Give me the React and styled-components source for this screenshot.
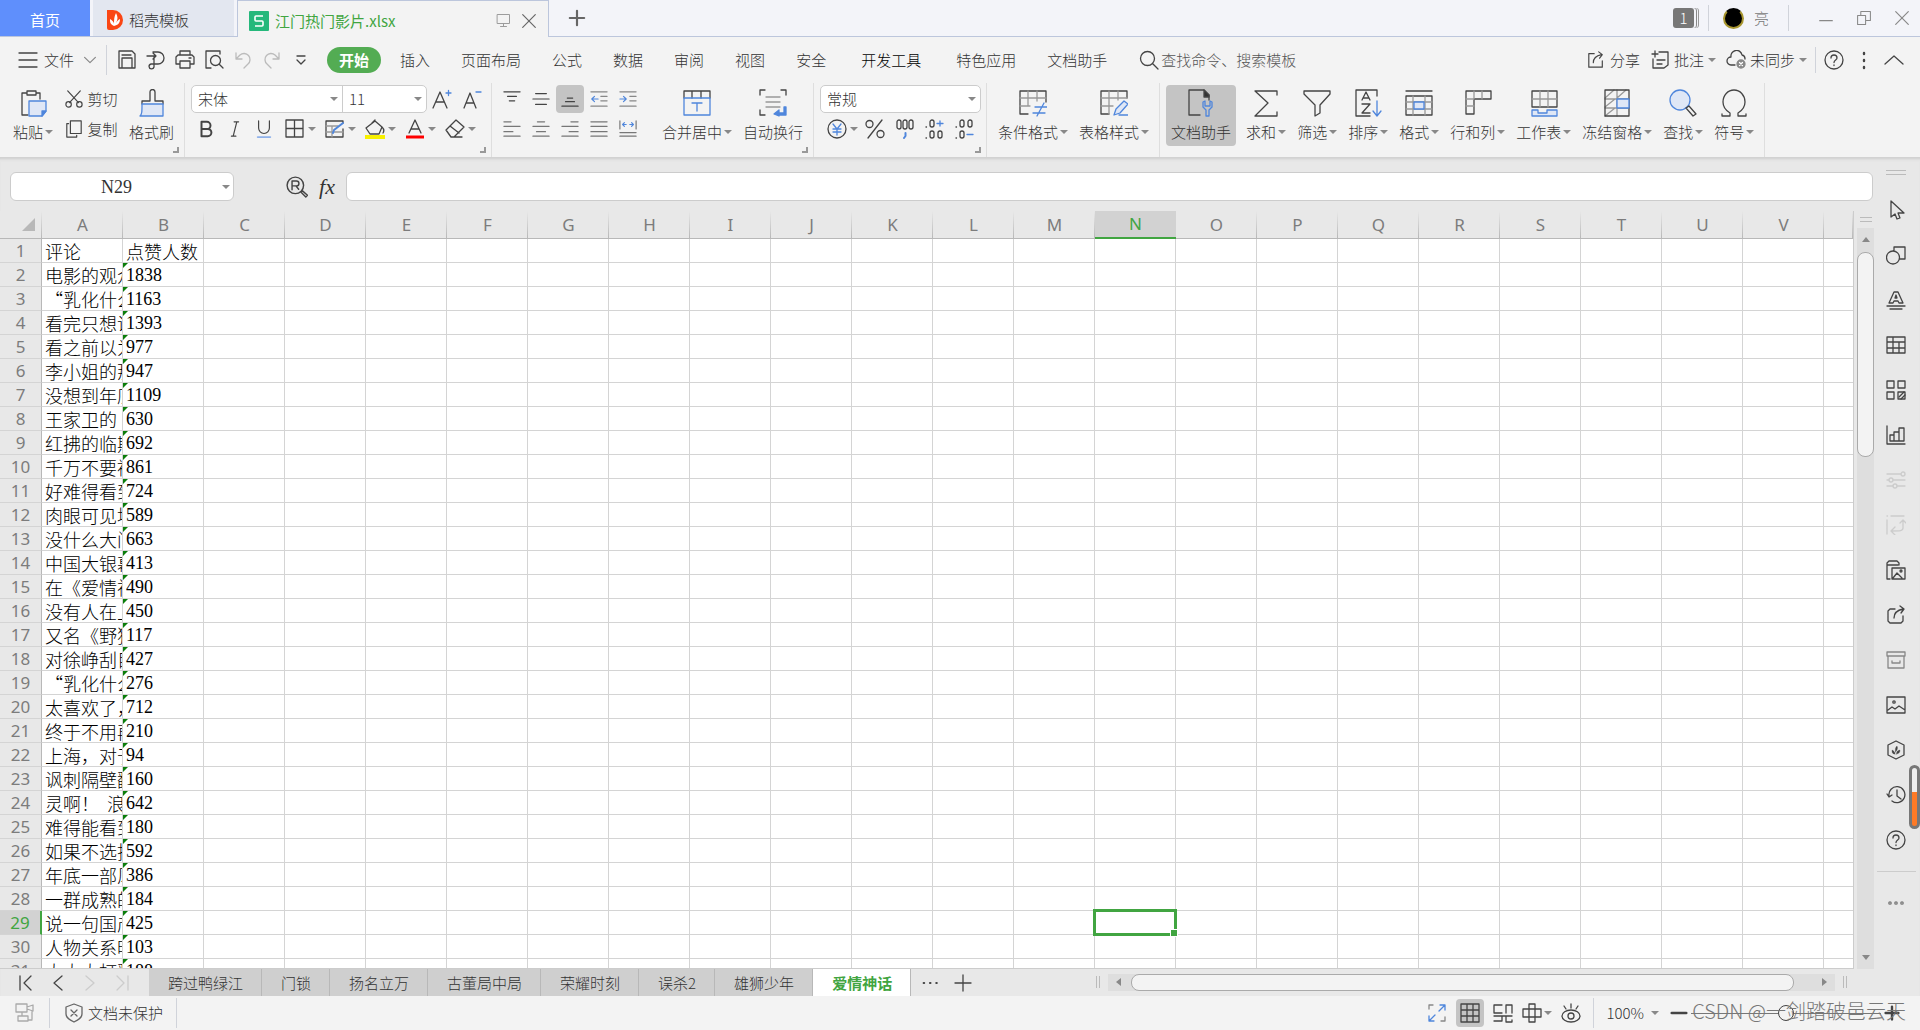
import React from 'react';
import styled, { createGlobalStyle } from 'styled-components';

const uiFont = '"Noto Sans CJK SC", "Noto Sans", sans-serif';
const cellFont = '"Liberation Serif", "Noto Sans CJK SC", serif';
const ink = '#444';
const blue = '#4f86dc';
const green = '#41a541';

const GlobalStyle = createGlobalStyle`
  * {
    box-sizing: border-box;
  }

  body {
    background: #e8e8e8;
    color: #333;
    font-family: ${uiFont};
    font-size: 15px;
    font-weight: 300;
    line-height: 20px;
    margin: 0;
    overflow: hidden;
  }

  button,
  input,
  select {
    background: none;
    border: 0;
    color: inherit;
    font: inherit;
    margin: 0;
    outline: 0;
    padding: 0;
  }
`;

/* ---------- icons ---------- */

const Svg = styled.svg`
  display: block;
  fill: none;
  flex: none;
  stroke: ${props => props.$tone || ink};
  stroke-linecap: round;
  stroke-linejoin: round;
  stroke-width: ${props => props.$weight || 1.3};
`;

const B = { stroke: blue };
const BF = { stroke: blue, fill: '#dfe7f6' };
const G = { stroke: '#999' };

const icons = {
  // 20px
  menu: <path d="M1 3h18M1 10h18M1 17h18" />,
  down: <path d="M4 7l6 6 6-6" />,
  up: <path d="M1 14l9-8 9 8" />,
  save: <path d="M2 1h13l3 3v14H2zM5 18V8h10v10M5 5h9" />,
  exportDoc: <path d="M1 6h9M7 3l3 3-3 3M7 2h5a6 6 0 010 12H8v3a2.500 2.500 0 11-3-3h3V7" />,
  print: <path d="M5 5V1h10v4M3 5h14l2 2v7h-4M5 14H1V7l2-2M5 11h10v7H5zM14 8h2" />,
  preview: <path d="M7 18H2V1h14v3M15 14l4 4M11.5 5.500a5 5 0 100 10 5 5 0 000-10z" />,
  undo: <path d="M3 3v6h6M3 9l4-4a6 6 0 118 9l-4 4" />,
  redo: <path d="M17 3v6h-6M17 9l-4-4a6 6 0 10-8 9l4 4" />,
  more: <path d="M6 6h8M6 10l4 4 4-4" />,
  search: <path d="M8.500 1.500a7 7 0 100 14 7 7 0 000-14zM14 14l5 5" />,
  share: <path d="M8 3H2v15h15v-7M7 13c0-5 4-8 9-9M13 1l4 3-3 4" />,
  comment: <path d="M9 2h9v13l-4 3H3V9M5 1v6M2 4h6M7 10h8M7 14h5" />,
  cloud: (
    <>
      <path d="M9 15H5a4 4 0 010-8 5.500 5.500 0 0111-2 4 4 0 013 4" />
      <circle cx="15" cy="14" r="4" fill="#888" stroke="#888" />
      <path d="M13.500 12.500l3 3M16.500 12.500l-3 3" stroke="#fff" />
    </>
  ),
  help: (
    <>
      <circle cx="10" cy="10" r="9" />
      <path d="M7 8a3 3 0 116 0c0 2-3 2-3 4.500M10 15v.5" />
    </>
  ),
  dots: <path d="M10 3v1M10 10v1M10 17v1" strokeWidth="2.400" />,
  scissors: (
    <>
      <path d="M3 1l12 13M17 1L5 14" />
      <circle cx="4" cy="16" r="3" />
      <circle cx="16" cy="16" r="3" />
    </>
  ),
  copy: <path d="M6 1h12v14H6zM4 4H2v15h11v-2" />,
  fontUp: (
    <>
      <path d="M1 19L8 3l7 16M4 13h8" />
      <path d="M14 4h5M16.500 1.500v5" {...B} />
    </>
  ),
  fontDown: (
    <>
      <path d="M2 19L8 4l6 15M4 14h8" />
      <path d="M14 3h5" {...B} />
    </>
  ),
  bold: <path d="M5 2h6a4 4 0 010 8H5zM5 10h7a4 4 0 010 8H5z" strokeWidth="2.200" />,
  italic: <path d="M9 2h5M6 18h5M12 2L8 18" />,
  underline: (
    <>
      <path d="M4 1v8a6 6 0 0012 0V1" />
      <path d="M3 19h14" stroke="#8fb1ea" strokeWidth="2" />
    </>
  ),
  borders: <path d="M1 1h17v17H1zM9.500 1v17M1 9.500h17" />,
  drawBorder: (
    <>
      <path d="M18 10v8H1V2h17v2" />
      <path d="M1 7h12M1 13h17M7 7v11" {...G} />
      <path d="M8 14l1-3 9-7" {...B} strokeWidth="2" />
    </>
  ),
  fill: (
    <>
      <path d="M1 9l9-7 7 6-3 7H5zM7 4l3-3M17 8c3 3 1 6 1 6" />
      <path d="M0 18h20" stroke="#f7f000" strokeWidth="4" strokeLinecap="butt" />
    </>
  ),
  fontColor: (
    <>
      <path d="M4 14l6-13 6 13M6 10h8" />
      <path d="M1 18h18" stroke="#f00" strokeWidth="3" strokeLinecap="butt" />
    </>
  ),
  eraser: <path d="M1 11L11 1l8 7-10 10H6zM5 7l9 7M9 18h8" />,
  yen: (
    <>
      <circle cx="10" cy="10" r="9" />
      <path d="M6 5l4 5 4-5M10 10v6M6 10h8M6 13h8" {...B} />
    </>
  ),
  percent: (
    <>
      <circle cx="4.500" cy="5" r="3.500" />
      <circle cx="15.500" cy="15" r="3.500" />
      <path d="M17 1L3 19" />
    </>
  ),
  thousands: (
    <>
      <rect x="2" y="1" width="4" height="9" rx="2" />
      <rect x="8" y="1" width="4" height="9" rx="2" />
      <rect x="14" y="1" width="4" height="9" rx="2" />
      <path d="M10.500 14v3l-1.500 2" {...B} strokeWidth="2" />
    </>
  ),
  decimalUp: (
    <>
      <rect x="5" y="1" width="4" height="7" rx="2" />
      <rect x="5" y="12" width="4" height="7" rx="2" />
      <rect x="13" y="12" width="4" height="7" rx="2" />
      <path d="M1 8h.5M1 19h.5" />
      <path d="M12 4.500h6M15 2v5" {...B} />
    </>
  ),
  decimalDown: (
    <>
      <rect x="5" y="1" width="4" height="7" rx="2" />
      <rect x="13" y="1" width="4" height="7" rx="2" />
      <rect x="5" y="12" width="4" height="7" rx="2" />
      <path d="M1 8h.5M1 19h.5" />
      <path d="M12 15.500h6" {...B} />
    </>
  ),
  alignTop: <path d="M1 2h18M5 7h10M7 12h6" />,
  alignMiddle: <path d="M4 4h12M1 10h18M4 16h12" />,
  alignBottom: <path d="M7 9h6M5 13h10M1 18h18" />,
  outdent: (
    <>
      <path d="M1 2h18M12 7h7M12 12h7M1 18h18" stroke="#888" />
      <path d="M9 10H2M5 7l-3 3 3 3" {...B} />
    </>
  ),
  indent: (
    <>
      <path d="M1 2h18M12 7h7M12 12h7M1 18h18" stroke="#888" />
      <path d="M1 10h7M5 7l3 3-3 3" {...B} />
    </>
  ),
  alignLeft: <path d="M1 2h8M1 7h18M1 13h10M1 18h18" />,
  alignCenter: <path d="M6 2h8M1 7h18M5 13h10M1 18h18" />,
  alignRight: <path d="M11 2h8M1 7h18M9 13h10M1 18h18" />,
  justify: <path d="M1 2h18M1 7h18M1 13h18M1 18h18" />,
  distribute: (
    <>
      <path d="M1 1v9M19 1v9M1 14h18M1 18h18" />
      <path d="M4 5h4M12 5h4M6 3L4 5l2 2M14 3l2 2-2 2" {...B} />
    </>
  ),
  findCell: (
    <>
      <circle cx="8.500" cy="8.500" r="7.500" />
      <path d="M5.500 12.500v-8h4a2.200 2.200 0 010 4.500h-4M9 9l2.500 3M13.500 14.500l1.500-1 4.500 4-1.500 1.500z" />
    </>
  ),
  // 28px
  paste: (
    <>
      <path d="M7 4H3v22h6M21 10V4h-4M8 2h9v4H8z" />
      <path d="M10 12h17v10l-4 5H10z" {...BF} />
      <path d="M23 27v-5h4z" fill={blue} {...B} />
    </>
  ),
  brush: (
    <>
      <path d="M4 15v-3h8V3a2.500 2.500 0 015 0v9h8v3" />
      <path d="M4 15h21v12H2c2-2 2-4 2-12z" {...BF} />
    </>
  ),
  merge: (
    <>
      <path d="M1 9V2h26v7M9 2v7M18 2v7" />
      <path d="M1 9h26v17H1zM9 14h10M14 14v8" {...B} />
    </>
  ),
  wrap: (
    <>
      <path d="M1 6V1h5M22 1h5v5M1 21v5h5" />
      <path d="M7 8h14M7 13h14M7 18h14" {...G} />
      <path d="M25 18h2v8H20v1l-5-2 5-4v3h5z" fill={blue} {...B} />
    </>
  ),
  conditional: (
    <>
      <path d="M9 25H1V2h26v11" />
      <path d="M1 9h26M1 17h10M9 2v15M18 2v10" {...G} />
      <path d="M16 18h12M14 24h12M25 14l-7 13" {...B} />
    </>
  ),
  tableStyle: (
    <>
      <path d="M9 25H1V2h26v7" />
      <path d="M1 9h26M1 17h12M9 2v23M18 2v9" {...G} />
      <path d="M14 26l2-6 8-8 4 3-8 9zM19 26h9" {...BF} />
    </>
  ),
  helper: (
    <>
      <path d="M13 26H2V1h15l5 5v5" />
      <path d="M17 1l5 5v2h-5z" fill="#333" />
      <path d="M16 13v5l3 3v6h3v-6l3-3v-5l-2-1v5h-5v-5z" {...B} />
    </>
  ),
  sum: <path d="M25 6V2H3l13 12L3 27h22v-4" />,
  filter: <path d="M1 2h26v3L17 16v8l-5 3V16L1 5z" />,
  sort: (
    <>
      <path d="M23 7V1H2v26h14" />
      <path d="M8 11l4-8 4 8M9 9h6M8 15h8l-8 9h8" />
      <path d="M23 12v14M19 22l4 5 4-5" {...B} />
    </>
  ),
  format: (
    <>
      <path d="M1 2h26M1 7h26v19H1z" />
      <path d="M1 13h26M1 20h26M8 7v19M20 7v19" {...G} />
      <path d="M9 13h10v7H9z" {...BF} />
    </>
  ),
  rowCol: (
    <>
      <path d="M2 2h25v8H10v15H2z" />
      <path d="M10 2v8M18 2v8M2 10h8M2 17h8" {...G} />
    </>
  ),
  worksheet: (
    <>
      <path d="M2 2h25v16H2z" />
      <path d="M2 10h25M10 2v16M18 2v16" {...G} />
      <path d="M2 21h6v3h9v-3h10v6H2z" {...BF} />
    </>
  ),
  freeze: (
    <>
      <path d="M2 10h24M2 19h24M14 1v26M2 9l9-8M14 9l9-8M2 18l10-8M2 27l10-8" {...G} />
      <path d="M2 1h24v26H2z" />
      <path d="M14 10h12v9H14z" {...BF} />
    </>
  ),
  find: (
    <>
      <circle cx="11" cy="11" r="10" {...BF} />
      <path d="M17 19l3-2 7 8-3 2z" />
    </>
  ),
  omega: <path d="M2 27h8v-3C5 21 3 17 3 13a11 12 0 0122 0c0 4-2 8-7 11v3h8M2 27v-2M26 27v-2" />,
  // side bar, 20px
  cursor: <path d="M5 1v16l4-3 2 5 3-1-2-5h6z" />,
  shapes: <path d="M8 6V2h11v12h-5M7 6a6.500 6.500 0 100 13A6.500 6.500 0 007 6z" />,
  wordArt: <path d="M3 13L8 2h4l5 11h-4l-1-2H8l-1 2zM9 8l1-3 1 3zM1 16h18M4 19h12" />,
  table: <path d="M1 2h18v16H1zM1 7h18M1 13h18M7 2v16M13 7v11" />,
  blocks: (
    <>
      <path d="M1 1h7v7H1zM12 1h7v7h-7zM1 12h7v7H1zM12 12h7v7h-7z" />
      <path d="M13 17l5-5M15 19l4-4" />
    </>
  ),
  chart: <path d="M1 1v18h18M4 16v-6h4v6zM8 16V7h5v9zM13 16V3h5v13z" />,
  sliders: (
    <>
      <path d="M1 4h14M1 10h2M7 10h12M1 16h6M11 16h8" />
      <circle cx="17" cy="4" r="2" />
      <circle cx="5" cy="10" r="2" />
      <circle cx="9" cy="16" r="2" />
    </>
  ),
  pivot: <path d="M1 1h.5M5 1h13M1 5v14M17 6v7c0 3-3 3-11 3M14 8l3-3 3 3M9 12l-4 4 4 4" />,
  gallery: (
    <>
      <path d="M4 19H1V3l2-2h8l2 2v2M1 5h11M6 8h13v11H6zM7 18l4-5 5 5" />
      <circle cx="15" cy="11" r="1" />
    </>
  ),
  shareSide: <path d="M9 4H4L2 6v10l2 2h11l2-2v-5M8 13c0-5 4-8 9-9M14 1l4 3-3 4" />,
  archive: <path d="M1 2h18v4H1zM2 6v12h16V6M6 11v2h8v-2" />,
  image: (
    <>
      <path d="M1 2h18v16H1zM2 15l4-3 3 2 4-3 6 4" />
      <circle cx="8" cy="7" r="1.200" />
    </>
  ),
  docer: (
    <>
      <path d="M10 1l8 4v10l-8 4-8-4V5z" />
      <path d="M9 14c-3 0-3-2-3-4 2 1 3 2 3 4zM9.500 12c-.5-3 0-5 1.500-6 1 2 .5 4-1.500 6zM10.500 14c0-2.500 1-3.500 3.500-4 0 2.500-1 3.500-3.500 4z" fill={ink} strokeWidth="0.300" />
    </>
  ),
  history: <path d="M3 11a8 8 0 113 5M1 9l2 3 3-2M11 5v6l4 3" />,
  ellipsis: (
    <>
      <circle cx="4" cy="10" r="1.200" />
      <circle cx="10" cy="10" r="1.200" />
      <circle cx="16" cy="10" r="1.200" />
    </>
  ),
  // bottom bars
  first: <path d="M4 3v14M15 3l-7 7 7 7" />,
  prev: <path d="M14 3l-8 7 8 7" />,
  next: <path d="M6 3l8 7-8 7" />,
  last: <path d="M5 3l7 7-7 7M16 3v14" />,
  threeDots: <path d="M3 10h.5M10 10h.5M17 10h.5" strokeWidth="2.400" />,
  plus: <path d="M10 2v16M2 10h16" />,
  record: <path d="M1 1h11v8H1zM12 4l6-2v6l-6-2M7 9v4M17 8v8M3 13h10v5H3zM13 17h4" />,
  shield: <path d="M10 1l8 3v7c0 4-4 6-8 8-4-2-8-4-8-8V4zM7 7l6 6M13 7l-6 6" />,
  fullscreen: (
    <>
      <path d="M2 6V2h4M18 14v4h-4" stroke="#888" />
      <path d="M12 8l6-6M13 2h5v5M8 12l-6 6M2 13v5h5" {...B} />
    </>
  ),
  normalView: <path d="M1 1h18v18H1zM1 7h18M1 13h18M7 1v18M13 1v18" />,
  pageView: <path d="M1 7V2h8M1 7v3h8M13 2v8M13 2h6v8M1 13h18M13 13v6h6v-2M1 18h8v-5" />,
  readView: <path d="M7 1h6v18H7zM1 6h18v8H1zM7 6v8M13 6v8" />,
  eye: (
    <>
      <ellipse cx="10" cy="13" rx="9" ry="6" />
      <circle cx="10" cy="13" r="3" />
      <path d="M10 1v4M3 3l2 3M17 3l-2 3" />
    </>
  ),
  // window
  screen: <path d="M2 2h16v12H2zM10 14v4M6 18h8" />,
  close: <path d="M3 3l14 14M17 3L3 17" />,
  restore: <path d="M2 7h10v11H2zM6 7V2h12v11h-6" />,
  minimize: <path d="M3 13h14" />,
  zoomOut: <path d="M2 10h16" />,
};

const Icon = ({ name, size = 20, box = 20, tone, weight }) => (
  <Svg width={size} height={size} viewBox={`0 0 ${box} ${box}`} $tone={tone} $weight={weight} aria-hidden="true">
    {icons[name]}
  </Svg>
);

const Caret = styled.span`
  border: 4px solid transparent;
  border-bottom-width: 0;
  border-top-color: #888;
  flex: none;
  height: 0;
  width: 0;
`;

/* ---------- title bar ---------- */

const Window = styled.div`
  display: flex;
  flex-direction: column;
  height: 100vh;
  overflow: hidden;
`;

const TitleBar = styled.header`
  align-items: stretch;
  background: #f3f4f9;
  border-bottom: 1px solid #bcc6dc;
  display: flex;
  flex: none;
  height: 37px;
`;

const HomeTab = styled.button`
  background: #5f8ffc;
  color: #fff;
  font-weight: 400;
  margin-right: 3px;
  padding-top: 3px;
  width: 90px;
`;

const DocTab = styled.button`
  align-items: center;
  background: ${props => (props.$active ? '#f3f3f3' : '#e3e7f0')};
  border: ${props => (props.$active ? '1px solid #bcc6dc' : '0')};
  border-bottom: 0;
  color: ${props => (props.$active ? green : '#333')};
  display: flex;
  font-weight: ${props => (props.$active ? 400 : 300)};
  gap: 6px;
  height: ${props => (props.$active ? '37px' : '36px')};
  margin-right: 3px;
  padding: 3px 9px 0 ${props => (props.$active ? '11px' : '14px')};
  text-align: left;
  width: ${props => props.$width}px;
`;

const TabName = styled.span`
  flex: 1;
`;

const TabTool = styled.span`
  display: flex;
  justify-content: center;
  width: 20px;
`;

const PlainButton = styled.button`
  align-items: center;
  display: flex;
  gap: ${props => props.$gap || 0}px;
  justify-content: center;
  min-width: ${props => props.$width || 0}px;
  white-space: nowrap;
`;

const TitleTools = styled.div`
  align-items: center;
  color: #777;
  display: flex;
  margin-left: auto;
`;

const Rule = styled.span`
  background: #d0d3da;
  flex: none;
  height: ${props => props.$height}px;
  margin: 0 ${props => props.$gap}px;
  width: 1px;
`;

const WindowCount = styled.span`
  background: #777;
  border-radius: 3px;
  box-shadow: 2px 0 0 #f3f4f9, 3px 0 0 #888, 4px 0 0 #f3f4f9, 5px 0 0 #999;
  color: #fff;
  line-height: 20px;
  text-align: center;
  width: 21px;
`;

const Avatar = styled.span`
  background: #000;
  border: 2px solid #a8962f;
  border-radius: 50%;
  border-top-color: #000;
  height: 21px;
  margin-right: 10px;
  width: 21px;
`;

/* ---------- menu ---------- */

const MenuBar = styled.nav`
  align-items: center;
  background: #f3f3f3;
  display: flex;
  flex: none;
  height: 46px;
  padding: 0 16px 0 18px;
`;

const QuickTools = styled.div`
  display: flex;
  gap: 9px;
`;

const MenuItems = styled.div`
  align-items: center;
  display: flex;
  gap: 31px;
  margin-left: 28px;
`;

const MenuItem = styled.button`
  color: ${props => (props.$strong ? '#000' : '#333')};
  margin: 0 ${props => (props.$strong ? 4 : 0)}px;
  white-space: nowrap;
`;

const ActiveMenu = styled.button`
  background: #53ac53;
  border-radius: 13px;
  color: #fff;
  font-weight: 700;
  height: 26px;
  margin: 0 -12px;
  padding: 0 12px;
`;

const SearchBox = styled.label`
  align-items: center;
  display: flex;
  flex: 1;
  gap: 2px;
  margin-left: 32px;

  input {
    flex: 1;
    min-width: 0;
  }

  input::placeholder {
    color: #555;
    opacity: 1;
  }
`;

const MenuRight = styled.div`
  align-items: center;
  display: flex;
  gap: 10px;
`;

/* ---------- ribbon ---------- */

const Ribbon = styled.section`
  background: #f3f3f3;
  border-bottom: 1px solid #d2d2d2;
  display: flex;
  flex: none;
  height: 75px;
  padding-left: 8px;
`;

const Group = styled.div`
  border-right: 1px solid #dedede;
  display: flex;
  gap: 1px;
  margin-right: 6px;
  padding: 2px 5px 0 0;
  position: relative;
`;

const Corner = styled.span`
  border: solid #999;
  border-width: 0 2px 2px 0;
  bottom: 4px;
  height: 6px;
  position: absolute;
  right: 5px;
  width: 6px;
`;

const BigButton = styled.button`
  align-items: center;
  background: ${props => (props.$active ? '#c4c4c4' : 'none')};
  border-radius: 4px;
  display: flex;
  flex-direction: column;
  gap: 5px;
  height: 61px;
  margin-right: ${props => (props.$active ? 4 : 0)}px;
  padding: 4px 5px 0;
`;

const Label = styled.span`
  align-items: center;
  display: flex;
  gap: 2px;
  white-space: nowrap;
`;

const Rows = styled.div`
  display: flex;
  flex-direction: column;
  gap: 2px;
  margin-right: ${props => props.$after || 0}px;
`;

const Row = styled.div`
  align-items: center;
  display: flex;
  gap: ${props => props.$gap || 0}px;
  height: 28px;
`;

const SmallButton = styled.button`
  align-items: center;
  background: ${props => (props.$active ? '#c4c4c4' : 'none')};
  border-radius: 4px;
  display: flex;
  height: 28px;
  justify-content: center;
  width: ${props => props.$width || 28}px;
`;

const SplitButton = styled.button`
  align-items: center;
  display: flex;
  gap: 3px;
  height: 28px;
  padding-left: 7px;
  width: 40px;
`;

const SelectGroup = styled.div`
  background: #fff;
  border: 1px solid #ccc;
  border-radius: 5px;
  display: flex;
  height: 28px;
`;

const SelectBox = styled.label`
  align-items: center;
  display: flex;
  position: relative;
  width: ${props => props.$width}px;

  & + & {
    border-left: 1px solid #ccc;
  }

  select {
    appearance: none;
    height: 100%;
    padding: 0 6px;
    width: 100%;
  }

  ${Caret} {
    pointer-events: none;
    position: absolute;
    right: 4px;
  }
`;

/* ---------- work area ---------- */

const Workspace = styled.main`
  box-shadow: inset 0 3px 3px -2px #ccc;
  display: flex;
  flex: 1;
  min-height: 0;
`;

const Book = styled.div`
  display: flex;
  flex: 1;
  flex-direction: column;
  min-width: 0;
`;

const FormulaBar = styled.div`
  align-items: center;
  display: flex;
  flex: none;
  height: 53px;
  padding: 14px 5px 10px 10px;
`;

const NameBox = styled.label`
  align-items: center;
  background: #fff;
  border: 1px solid #ccc;
  border-radius: 6px;
  display: flex;
  height: 29px;
  margin-right: 52px;
  padding-right: 3px;
  width: 224px;

  input {
    flex: 1;
    font-family: ${cellFont};
    font-size: 18px;
    min-width: 0;
    text-align: center;
  }
`;

const Fx = styled.button`
  font-family: "Liberation Serif", serif;
  font-size: 22px;
  font-style: italic;
  line-height: 26px;
  margin: 0 9px;
  width: 20px;
`;

const FormulaInput = styled.input`
  background: #fff;
  border: 1px solid #ccc;
  border-radius: 6px;
  flex: 1;
  height: 29px;
  min-width: 0;
`;

const SheetArea = styled.div`
  display: flex;
  flex: 1;
  min-height: 0;
`;

const SheetView = styled.div`
  border-bottom: 1px solid #ccc;
  border-right: 1px solid #ccc;
  flex: 1;
  min-width: 0;
  overflow: hidden;
`;

const Sheet = styled.table`
  border-collapse: separate;
  border-spacing: 0;
  table-layout: fixed;
  width: 100%;

  th,
  td {
    padding: 0;
  }
`;

const Col = styled.col`
  width: ${props => props.$width};
`;

const ColHead = styled.th`
  background: ${props =>
    props.$selected ? '#d2d2d2' : 'linear-gradient(#e8e8e8, #b8b8b8) right / 1px 100% no-repeat #e8e8e8'};
  border-bottom: ${props => (props.$selected ? `2px solid ${green}` : '1px solid #b8b8b8')};
  color: ${props => (props.$selected ? green : '#7c7c7c')};
  font-family: "Noto Sans", sans-serif;
  font-size: 17px;
  font-weight: 400;
  height: 28px;
  line-height: 24px;
`;

const SelectAll = styled.button`
  border-bottom: 13px solid #b8b8b8;
  border-left: 13px solid transparent;
  display: block;
  height: 0;
  margin-left: 22px;
  width: 0;
`;

const RowHead = styled.th`
  background: ${props => (props.$selected ? '#d2d2d2' : '#e8e8e8')};
  border-bottom: 1px solid #d4d4d4;
  border-right: ${props => (props.$selected ? `2px solid ${green}` : '1px solid #b8b8b8')};
  color: ${props => (props.$selected ? green : '#7c7c7c')};
  font-family: "Noto Sans", sans-serif;
  font-size: 17px;
  font-weight: 400;
  height: 24px;
  line-height: 22px;
`;

const Cell = styled.td`
  background: #fff;
  border-bottom: 1px solid #d4d4d4;
  border-right: 1px solid #d4d4d4;
  color: #000;
  font-family: ${props => (props.$number ? cellFont : uiFont)};
  font-size: 18px;
  font-weight: 300;
  height: 24px;
  line-height: 24px;
  position: relative;

  &:last-child {
    border-right: 0;
  }
`;

const CellText = styled.div`
  height: 23px;
  overflow: hidden;
  padding-left: 3px;
  white-space: pre;
`;

// green corner of a number stored as text
const TextFlag = styled.span`
  border-right: 5px solid transparent;
  border-top: 5px solid #0a7d0a;
  left: 0;
  position: absolute;
  top: 0;
`;

const Selection = styled.span`
  border: 3px solid ${green};
  inset: -2px;
  pointer-events: none;
  position: absolute;
  z-index: 1;

  &::after {
    background: ${green};
    border: 1px solid #fff;
    bottom: -4px;
    content: '';
    height: 6px;
    position: absolute;
    right: -4px;
    width: 6px;
  }
`;

const ScrollColumn = styled.div`
  align-items: center;
  display: flex;
  flex: none;
  flex-direction: column;
  padding: 6px 1px 0 0;
  width: 24px;
`;

const Grip = styled.span`
  border: solid #bbb;
  border-width: ${props => (props.$upright ? '0 1px' : '1px 0')};
  flex: none;
  height: ${props => (props.$upright ? 12 : 5)}px;
  width: ${props => (props.$upright ? 4 : props.$width)}px;
`;

const VTrack = styled.div`
  align-items: center;
  background: #dedede;
  display: flex;
  flex: 1;
  flex-direction: column;
  margin-top: 6px;
  padding: 9px 0;
  width: 17px;
`;

const Thumb = styled.div`
  background: #f3f3f3;
  border: 1px solid #aaa;
  border-radius: 8px;
`;

const VThumb = styled(Thumb)`
  height: 28.3%;
  margin: 10px 0 auto;
  width: 17px;
`;

const HThumb = styled(Thumb)`
  flex: 1;
  height: 17px;
  margin: 0 28px 0 10px;
`;

const Arrow = styled.button`
  border: 4px solid transparent;
  border-${props => props.$from}: 5px solid #888;
  border-${props => props.$to}: 0;
  flex: none;
  height: 0;
  width: 0;
`;

const SheetBar = styled.div`
  align-items: stretch;
  display: flex;
  flex: none;
  height: 27px;
`;

const SheetNav = styled.div`
  align-items: center;
  display: flex;
  gap: 12px;
  padding: 0 17px 0 16px;
`;

const SheetTab = styled.button`
  background: ${props => (props.$active ? '#fff' : '#cfcfcf')};
  border-right: 1px solid #b8b8b8;
  color: ${props => (props.$active ? green : '#333')};
  font-weight: ${props => (props.$active ? 700 : 300)};
  padding: 0 18px 0 19px;
  white-space: nowrap;
`;

const HScroll = styled.div`
  align-items: center;
  display: flex;
  gap: 8px;
  margin: 0 31px 0 auto;
  padding-bottom: 1px;
  width: 40%;
`;

const HTrack = styled.div`
  align-items: center;
  background: #dedede;
  display: flex;
  flex: 1;
  height: 17px;
  padding: 0 8px;
`;

const SideBar = styled.aside`
  align-items: center;
  display: flex;
  flex: none;
  flex-direction: column;
  gap: 25px;
  padding: 12px 6px 0 0;
  width: 42px;
`;

const SideRule = styled.span`
  background: #ccc;
  height: 1px;
  margin: -4px 0;
  width: 39px;
`;

const Gauge = styled.div`
  background: linear-gradient(#eee 42%, #ff7a26 42%);
  border: 3px solid #777;
  border-radius: 6px;
  height: 64px;
  position: absolute;
  right: 0;
  top: 765px;
  width: 11px;
`;

/* ---------- status bar ---------- */

const StatusBar = styled.footer`
  align-items: center;
  background: #f3f3f3;
  display: flex;
  flex: none;
  height: 34px;
  padding: 0 20px 0 15px;
  position: relative;
`;

const ViewTools = styled.div`
  align-items: center;
  display: flex;
  gap: 9px;
  margin-left: auto;
`;

const ZoomRange = styled.input`
  appearance: none;
  height: 16px;
  margin: 0 3px;
  width: 190px;

  &::-webkit-slider-runnable-track {
    background: linear-gradient(#777, #777) center / 100% 1px no-repeat;
    height: 16px;
  }

  &::-webkit-slider-thumb {
    appearance: none;
    background: #f3f3f3;
    border: 1px solid #444;
    border-radius: 50%;
    height: 16px;
    width: 16px;
  }
`;

const Watermark = styled.span`
  color: #777;
  font-size: 20px;
  padding-bottom: 5px;
  pointer-events: none;
  position: absolute;
  right: 14px;
  white-space: nowrap;
`;

/* ---------- data ---------- */

const columns = 'ABCDEFGHIJKLMNOPQRSTUV'.split('');

const rows = [
  ['评论', '点赞人数'],
  ['电影的观众', '1838'],
  ['“乳化什么', '1163'],
  ['看完只想说', '1393'],
  ['看之前以为', '977'],
  ['李小姐的那', '947'],
  ['没想到年底', '1109'],
  ['王家卫的', '630'],
  ['红拂的临期', '692'],
  ['千万不要被', '861'],
  ['好难得看到', '724'],
  ['肉眼可见地', '589'],
  ['没什么大问', '663'],
  ['中国大银幕', '413'],
  ['在《爱情神', '490'],
  ['没有人在上', '450'],
  ['又名《野狼', '117'],
  ['对徐峥刮目', '427'],
  ['“乳化什么', '276'],
  ['太喜欢了，', '712'],
  ['终于不用再', '210'],
  ['上海，对于', '94'],
  ['讽刺隔壁翻', '160'],
  ['灵啊！  浪', '642'],
  ['难得能看到', '180'],
  ['如果不选择', '592'],
  ['年底一部风', '386'],
  ['一群成熟的', '184'],
  ['说一句国产', '425'],
  ['人物关系明', '103'],
  ['大大大打翻', '188'],
];

const selected = { column: 'N', row: 29 };

const menus = ['插入', '页面布局', '公式', '数据', '审阅', '视图', '安全', '开发工具', '特色应用', '文档助手'];

const tools = [
  { icon: 'helper', label: '文档助手', active: true },
  { icon: 'sum', label: '求和' },
  { icon: 'filter', label: '筛选' },
  { icon: 'sort', label: '排序' },
  { icon: 'format', label: '格式' },
  { icon: 'rowCol', label: '行和列' },
  { icon: 'worksheet', label: '工作表' },
  { icon: 'freeze', label: '冻结窗格' },
  { icon: 'find', label: '查找' },
  { icon: 'omega', label: '符号' },
];

const sheets = ['跨过鸭绿江', '门锁', '扬名立万', '古董局中局', '荣耀时刻', '误杀2', '雄狮少年', '爱情神话'];

const sideTools = [
  ['cursor'],
  ['shapes'],
  ['wordArt'],
  ['table'],
  ['blocks'],
  ['chart'],
  ['sliders', '#ccc'],
  ['pivot', '#ccc'],
  ['gallery'],
  ['shareSide'],
  ['archive', '#888'],
  ['image'],
  ['docer'],
  ['history'],
  ['help'],
];

/* ---------- components ---------- */

const Tool = ({ icon, label, active, caret = !active }) => (
  <BigButton $active={active}>
    <Icon name={icon} size={28} box={28} />
    <Label>
      {label}
      {caret && <Caret />}
    </Label>
  </BigButton>
);

const Split = ({ icon, label }) => (
  <SplitButton aria-label={label}>
    <Icon name={icon} />
    <Caret />
  </SplitButton>
);

const Choice = ({ label, value, width }) => (
  <SelectBox $width={width}>
    <select aria-label={label} defaultValue={value}>
      <option>{value}</option>
    </select>
    <Caret />
  </SelectBox>
);

const Title = () => (
  <TitleBar>
    <HomeTab>首页</HomeTab>
    <DocTab $width={141}>
      <svg width="16" height="24" viewBox="0 0 16 24" aria-hidden="true">
        <path d="M0 2h6a10 10 0 0110 10A10 10 0 016 22H2a2 2 0 01-2-2z" fill="#fa4614" />
        <path d="M7 18c-4-2-4-4-4-7 2 1 4 3 4 5 0-4 0-7 2-11 2 4 2 6 0 10 1-2 2-3 4-4 0 4-2 6-6 7z" fill="#fff" />
      </svg>
      稻壳模板
    </DocTab>
    <DocTab $width={312} $active>
      <svg width="20" height="20" viewBox="0 0 20 20" aria-hidden="true">
        <rect width="20" height="20" rx="1" fill="#25b87b" />
        <path d="M14 5H7a1 1 0 00-1 1v3a1 1 0 001 1h6a1 1 0 011 1v3a1 1 0 01-1 1H6" fill="none" stroke="#fff" strokeWidth="1.600" />
      </svg>
      <TabName>江门热门影片.xlsx</TabName>
      <TabTool>
        <Icon name="screen" size={15} tone="#999" />
      </TabTool>
      <TabTool>
        <Icon name="close" size={18} tone="#666" />
      </TabTool>
    </DocTab>
    <PlainButton $width={50} aria-label="新建">
      <Icon name="plus" size={18} weight={2.4} tone="#666" />
    </PlainButton>
    <TitleTools>
      <WindowCount>1</WindowCount>
      <Rule $height={26} $gap={14} />
      <Avatar />
      亮
      <Rule $height={26} $gap={19} />
      <PlainButton $width={36} aria-label="最小化">
        <Icon name="minimize" size={18} tone="#888" />
      </PlainButton>
      <PlainButton $width={40} aria-label="还原">
        <Icon name="restore" size={16} tone="#888" />
      </PlainButton>
      <PlainButton $width={36} aria-label="关闭">
        <Icon name="close" size={18} tone="#888" />
      </PlainButton>
    </TitleTools>
  </TitleBar>
);

const Menu = () => (
  <MenuBar>
    <PlainButton $gap={6}>
      <Icon name="menu" />
      文件
    </PlainButton>
    <Rule $height={0} $gap={3} />
    <Icon name="down" size={18} tone="#888" />
    <Rule $height={30} $gap={7} />
    <Rule $height={0} $gap={1} />
    <QuickTools>
      {['save', 'exportDoc', 'print', 'preview'].map(name => (
        <PlainButton key={name} aria-label={name}>
          <Icon name={name} />
        </PlainButton>
      ))}
      <Icon name="undo" tone="#bbb" />
      <Icon name="redo" tone="#bbb" />
      <Icon name="more" />
    </QuickTools>
    <MenuItems>
      <ActiveMenu>开始</ActiveMenu>
      {menus.map(name => (
        <MenuItem key={name} $strong={name === '开发工具'}>
          {name}
        </MenuItem>
      ))}
    </MenuItems>
    <SearchBox>
      <Icon name="search" />
      <input aria-label="搜索" placeholder="查找命令、搜索模板" />
    </SearchBox>
    <MenuRight>
      <PlainButton $gap={5}>
        <Icon name="share" size={18} />
        分享
      </PlainButton>
      <PlainButton $gap={4}>
        <Icon name="comment" />
        批注
        <Caret />
      </PlainButton>
      <PlainButton $gap={4}>
        <Icon name="cloud" />
        未同步
        <Caret />
      </PlainButton>
      <Rule $height={26} $gap={-2} />
      <Icon name="help" />
      <Icon name="dots" />
      <Icon name="up" />
    </MenuRight>
  </MenuBar>
);

const RibbonBar = () => (
  <Ribbon>
    <Group>
      <Tool icon="paste" label="粘贴" />
      <Rows>
        <Row>
          <PlainButton $gap={5} $width={64}>
            <Icon name="scissors" size={18} />
            剪切
          </PlainButton>
        </Row>
        <Row>
          <PlainButton $gap={5} $width={64}>
            <Icon name="copy" size={18} />
            复制
          </PlainButton>
        </Row>
      </Rows>
      <Tool icon="brush" label="格式刷" caret={false} />
      <Corner />
    </Group>
    <Group>
      <Rows>
        <Row>
          <SelectGroup>
            <Choice label="字体" value="宋体" width={150} />
            <Choice label="字号" value="11" width={84} />
          </SelectGroup>
          <SmallButton $width={30} aria-label="增大字号">
            <Icon name="fontUp" />
          </SmallButton>
          <SmallButton $width={29} aria-label="减小字号">
            <Icon name="fontDown" />
          </SmallButton>
        </Row>
        <Row>
          {['bold', 'italic', 'underline'].map(name => (
            <SmallButton key={name} $width={29} aria-label={name}>
              <Icon name={name} size={18} />
            </SmallButton>
          ))}
          <Split icon="borders" label="边框" />
          <Split icon="drawBorder" label="绘图边框" />
          <Split icon="fill" label="填充颜色" />
          <Split icon="fontColor" label="字体颜色" />
          <Split icon="eraser" label="清除" />
        </Row>
      </Rows>
      <Corner />
    </Group>
    <Group>
      <Rows $after={14}>
        <Row $gap={1}>
          {['alignTop', 'alignMiddle', 'alignBottom', 'outdent', 'indent'].map(name => (
            <SmallButton key={name} $active={name === 'alignBottom'} aria-label={name}>
              <Icon name={name} size={18} />
            </SmallButton>
          ))}
        </Row>
        <Row $gap={1}>
          {['alignLeft', 'alignCenter', 'alignRight', 'justify', 'distribute'].map(name => (
            <SmallButton key={name} aria-label={name}>
              <Icon name={name} size={18} tone="#777" />
            </SmallButton>
          ))}
        </Row>
      </Rows>
      <Tool icon="merge" label="合并居中" />
      <Tool icon="wrap" label="自动换行" caret={false} />
      <Corner />
    </Group>
    <Group>
      <Rows>
        <Row>
          <SelectGroup>
            <Choice label="数字格式" value="常规" width={159} />
          </SelectGroup>
        </Row>
        <Row>
          <Split icon="yen" label="货币" />
          {['percent', 'thousands', 'decimalUp', 'decimalDown'].map(name => (
            <SmallButton key={name} $width={30} aria-label={name}>
              <Icon name={name} />
            </SmallButton>
          ))}
        </Row>
      </Rows>
      <Corner />
    </Group>
    <Group>
      <Tool icon="conditional" label="条件格式" />
      <Tool icon="tableStyle" label="表格样式" />
    </Group>
    <Group>
      {tools.map(tool => (
        <Tool key={tool.label} {...tool} />
      ))}
    </Group>
  </Ribbon>
);

const SheetRow = ({ number, values }) => (
  <tr>
    <RowHead scope="row" $selected={number === selected.row}>
      {number}
    </RowHead>
    {columns.map((column, i) => (
      <Cell key={column} $number={i === 1 && number > 1}>
        {values[i] && <CellText>{values[i]}</CellText>}
        {i === 1 && number > 1 && <TextFlag />}
        {column === selected.column && number === selected.row && <Selection />}
      </Cell>
    ))}
    <Cell />
  </tr>
);

const Grid = () => (
  <SheetView>
    <Sheet>
      <colgroup>
        <Col $width="42px" />
        {columns.map(column => (
          <Col key={column} $width="81px" />
        ))}
        <Col $width="auto" />
      </colgroup>
      <thead>
        <tr>
          <ColHead>
            <SelectAll aria-label="全选" />
          </ColHead>
          {columns.map(column => (
            <ColHead key={column} scope="col" $selected={column === selected.column}>
              {column}
            </ColHead>
          ))}
          <ColHead />
        </tr>
      </thead>
      <tbody>
        {rows.map((values, i) => (
          <SheetRow key={i} number={i + 1} values={values} />
        ))}
      </tbody>
    </Sheet>
  </SheetView>
);

const Sheets = () => (
  <SheetBar>
    <SheetNav>
      <Icon name="first" />
      <Icon name="prev" />
      <Icon name="next" tone="#ccc" />
      <Icon name="last" tone="#ccc" />
    </SheetNav>
    {sheets.map(name => (
      <SheetTab key={name} $active={name === '爱情神话'}>
        {name}
      </SheetTab>
    ))}
    <PlainButton $width={38} aria-label="更多工作表">
      <Icon name="threeDots" size={18} />
    </PlainButton>
    <PlainButton $width={28} aria-label="新建工作表">
      <Icon name="plus" />
    </PlainButton>
    <HScroll>
      <Grip $upright />
      <HTrack>
        <Arrow $from="right" $to="left" aria-label="向左" />
        <HThumb />
        <Arrow $from="left" $to="right" aria-label="向右" />
      </HTrack>
      <Grip $upright />
    </HScroll>
  </SheetBar>
);

const Status = () => (
  <StatusBar>
    <Icon name="record" tone="#aaa" />
    <Rule $height={30} $gap={14} />
    <PlainButton $gap={4}>
      <Icon name="shield" tone="#666" />
      文档未保护
    </PlainButton>
    <Rule $height={30} $gap={13} />
    <ViewTools>
      <Icon name="fullscreen" />
      <SmallButton $active aria-label="普通视图">
        <Icon name="normalView" />
      </SmallButton>
      <Icon name="pageView" />
      <PlainButton $gap={2} aria-label="阅读模式">
        <Icon name="readView" />
        <Caret />
      </PlainButton>
      <Icon name="eye" />
      <Rule $height={30} $gap={3} />
      <PlainButton $gap={7}>
        100%
        <Caret />
      </PlainButton>
    </ViewTools>
    <Rule $height={0} $gap={5} />
    <Icon name="zoomOut" size={18} weight={3} />
    <ZoomRange type="range" aria-label="缩放" defaultValue="50" />
    <Icon name="plus" size={16} weight={3} />
    <Watermark>CSDN @一剑踏破邑云天</Watermark>
  </StatusBar>
);

const App = () => (
  <Window lang="zh-CN">
    <GlobalStyle />
    <Title />
    <Menu />
    <RibbonBar />
    <Workspace>
      <Book>
        <FormulaBar>
          <NameBox>
            <input aria-label="名称框" defaultValue="N29" />
            <Caret />
          </NameBox>
          <PlainButton aria-label="浏览公式结果">
            <Icon name="findCell" size={22} />
          </PlainButton>
          <Fx>fx</Fx>
          <FormulaInput aria-label="编辑栏" />
        </FormulaBar>
        <SheetArea>
          <Grid />
          <ScrollColumn>
            <Grip $width={12} />
            <VTrack>
              <Arrow $from="bottom" $to="top" aria-label="向上" />
              <VThumb />
              <Arrow $from="top" $to="bottom" aria-label="向下" />
            </VTrack>
          </ScrollColumn>
        </SheetArea>
        <Sheets />
      </Book>
      <SideBar>
        <Grip $width={20} />
        {sideTools.map(([name, tone]) => (
          <PlainButton key={name} aria-label={name}>
            <Icon name={name} tone={tone} />
          </PlainButton>
        ))}
        <SideRule />
        <Icon name="ellipsis" tone="#777" />
      </SideBar>
    </Workspace>
    <Status />
    <Gauge />
  </Window>
);

export default App;
